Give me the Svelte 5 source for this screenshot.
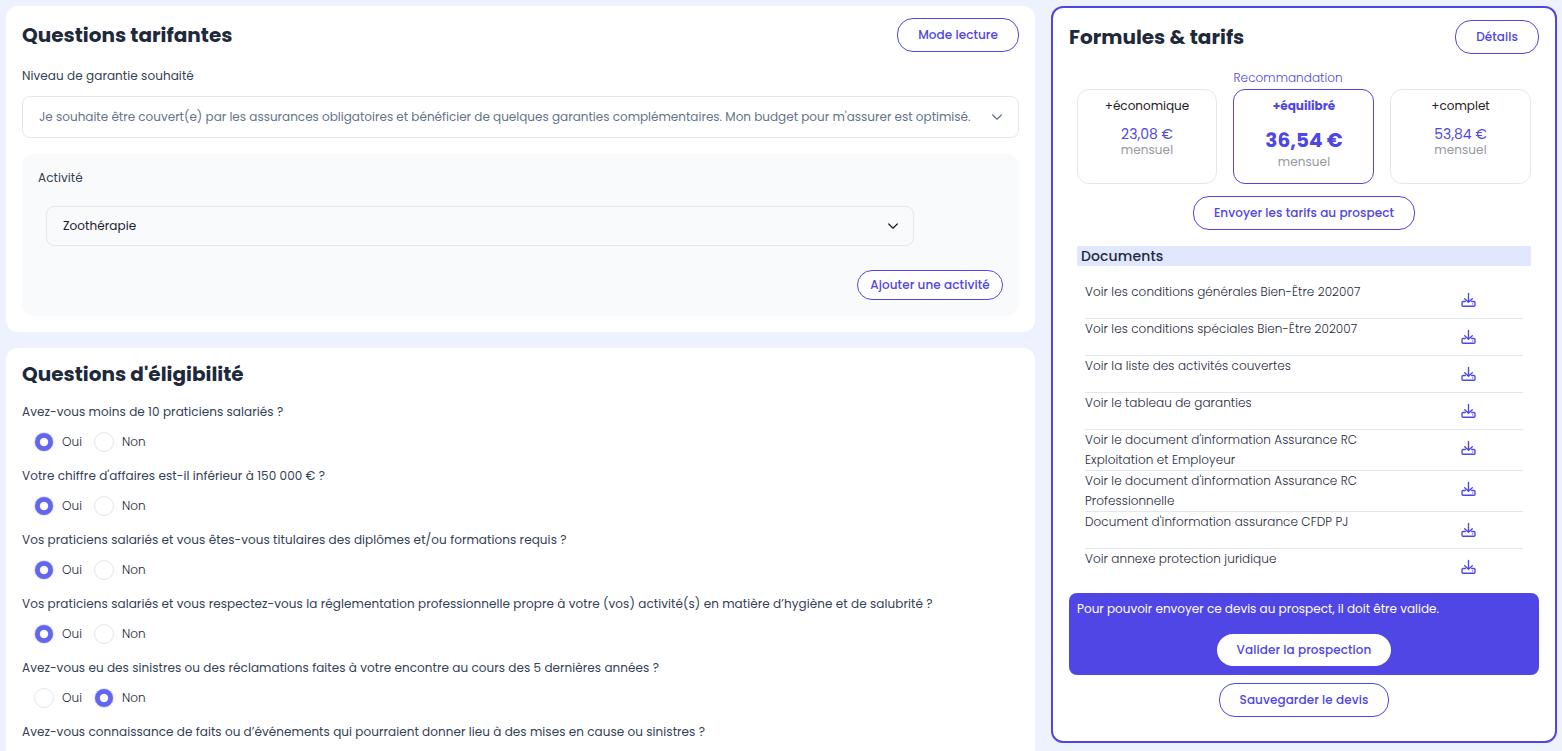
<script>
  const questions = [
    { text: 'Avez-vous moins de 10 praticiens salariés ?', yes: true },
    { text: "Votre chiffre d'affaires est-il inférieur à 150 000 € ?", yes: true },
    { text: 'Vos praticiens salariés et vous êtes-vous titulaires des diplômes et/ou formations requis ?', yes: true },
    { text: 'Vos praticiens salariés et vous respectez-vous la réglementation professionnelle propre à votre (vos) activité(s) en matière d’hygiène et de salubrité ?', yes: true },
    { text: 'Avez-vous eu des sinistres ou des réclamations faites à votre encontre au cours des 5 dernières années ?', yes: false, snug: true },
    { text: 'Avez-vous connaissance de faits ou d’événements qui pourraient donner lieu à des mises en cause ou sinistres ?', snug: true }
  ];
  const plans = [
    { name: '+économique', price: '23,08 €' },
    { name: '+équilibré', price: '36,54 €', best: true },
    { name: '+complet', price: '53,84 €' }
  ];
  const documents = [
    ['Voir les conditions générales Bien-Être 202007'],
    ['Voir les conditions spéciales Bien-Être 202007'],
    ['Voir la liste des activités couvertes'],
    ['Voir le tableau de garanties'],
    ["Voir le document d'information Assurance RC", 'Exploitation et Employeur'],
    ["Voir le document d'information Assurance RC", 'Professionnelle'],
    ["Document d'information assurance CFDP PJ"],
    ['Voir annexe protection juridique']
  ];
</script>

{#snippet chevron()}
  <svg class="chevron" viewBox="0 0 12 12" width="12" height="12"><path d="M1.7 4 6 8.2 10.3 4" /></svg>
{/snippet}

<div class="page">
  <main>
    <section class="card rates">
      <header>
        <h2>Questions tarifantes</h2>
        <button>Mode lecture</button>
      </header>
      <p class="label">Niveau de garantie souhaité</p>
      <div class="select level">
        <span>Je souhaite être couvert(e) par les assurances obligatoires et bénéficier de quelques garanties complémentaires. Mon budget pour m'assurer est optimisé.</span>
        {@render chevron()}
      </div>
      <div class="activity">
        <p class="label">Activité</p>
        <div class="select kind">
          <span>Zoothérapie</span>
          {@render chevron()}
        </div>
        <button class="small">Ajouter une activité</button>
      </div>
    </section>

    <section class="card eligibility">
      <h2>Questions d'éligibilité</h2>
      {#each questions as q}
        <div class="question">
          <p class="label" class:snug={q.snug}>{q.text}</p>
          {#if q.yes !== undefined}
            <div class="choices">
              <span class="radio" class:on={q.yes}></span>
              <span class="answer">Oui</span>
              <span class="radio" class:on={!q.yes}></span>
              <span class="answer">Non</span>
            </div>
          {/if}
        </div>
      {/each}
    </section>
  </main>

  <aside>
    <header>
      <h2>Formules &amp; tarifs</h2>
      <button>Détails</button>
    </header>
    <p class="advice">Recommandation</p>
    <div class="plans">
      {#each plans as p}
        <div class="plan" class:best={p.best}>
          <div class="name">{p.name}</div>
          <div class="price">{p.price}</div>
          <div class="period">mensuel</div>
        </div>
      {/each}
    </div>
    <button class="send">Envoyer les tarifs au prospect</button>
    <h3>Documents</h3>
    <ul>
      {#each documents as lines}
        <li>
          <div class="doc">
            {#each lines as text}
              <div>{text}</div>
            {/each}
          </div>
          <svg class="download" viewBox="0 0 16 16" width="16" height="16">
            <path d="M7.5 1.5V10M3.7 6.7l3.8 3.6 3.8-3.6M4.3 9.5H2.2Q1 9.5 1 10.5v2.7q0 1 1 1h11q1 0 1-1v-2.7q0-1-1.2-1h-2.1" />
            <circle cx="11.7" cy="11.9" r=".6" />
          </svg>
        </li>
      {/each}
    </ul>
    <div class="notice">
      <p>Pour pouvoir envoyer ce devis au prospect, il doit être valide.</p>
      <button class="solid">Valider la prospection</button>
    </div>
    <button class="save">Sauvegarder le devis</button>
  </aside>
</div>

<style>
  :global(body) { margin: 0; background: #eef2ff; overflow: hidden; }
  .page, .page * { box-sizing: border-box; }
  .page {
    display: flex;
    gap: 16px;
    height: 751px;
    padding: 6px 5px 0 6px;
    overflow: hidden;
    background: #eef2ff;
    color: #334155;
    font: 400 12px/20px Poppins, Inter, sans-serif;
  }
  h2, h3, p, ul { margin: 0; padding: 0; }
  span, p, h2, button { white-space: nowrap; }
  main { width: 1029px; flex: none; display: flex; flex-direction: column; gap: 16px; }
  .card { flex: none; background: #fff; border-radius: 12px; padding: 0 16px; }
  .rates { height: 326px; padding-top: 12px; }
  header { display: flex; justify-content: space-between; align-items: center; height: 34px; }
  h2 { font-size: 20px; line-height: 28px; font-weight: 700; color: #1e293b; }
  button {
    display: flex;
    align-items: center;
    justify-content: center;
    height: 34px;
    padding: 0 20px;
    border: 1px solid #4f46e5;
    border-radius: 16px;
    background: #fff;
    color: #4f46e5;
    font: inherit;
    font-weight: 500;
    letter-spacing: .075px;
  }
  .label { height: 20px; font-weight: 400; letter-spacing: .07px; }
  .label.snug { letter-spacing: .055px; }
  .rates > .label { margin-top: 14px; }
  .select {
    display: flex;
    align-items: center;
    justify-content: space-between;
    border: 1px solid #e2e8f0;
    border-radius: 8px;
    padding: 0 15px 0 16px;
  }
  .level { height: 42px; margin-top: 10px; color: #64748b; }
  .chevron { flex: none; fill: none; stroke: currentColor; stroke-width: 1.2; stroke-linecap: round; stroke-linejoin: round; }
  .activity {
    display: flex;
    flex-direction: column;
    height: 162px;
    margin-top: 16px;
    padding: 14px 16px 16px;
    border-radius: 12px;
    background: #f8fafc;
  }
  .kind { width: 868px; height: 40px; margin: 18px 0 24px 8px; padding-right: 14px; color: #1e1b2e; letter-spacing: .07px; }
  .small { align-self: flex-end; width: 146px; height: 30px; padding: 0; letter-spacing: .1px; }
  .eligibility { height: 460px; padding-top: 12px; }
  .question { height: 64px; }
  .eligibility h2 { margin-bottom: 14px; }
  .choices { display: flex; align-items: center; height: 20px; margin-top: 10px; padding-left: 12px; }
  .radio { width: 20px; height: 20px; border: 1px solid #e5e7eb; border-radius: 50%; background: #fff; }
  .radio.on { background: radial-gradient(circle, #fff 3.7px, #6366f1 4.6px); border-color: #dfe0fb; }
  .answer { width: 40px; padding-left: 8px; font-weight: 300; letter-spacing: .05px; color: #1e293b; }

  aside {
    width: 506px;
    height: 737px;
    padding: 12px 16px;
    border: 2px solid #4f46e5;
    border-radius: 12px;
    background: #fff;
  }
  .advice { height: 20px; margin-top: 14px; padding-left: 164.5px; font-weight: 300; letter-spacing: .06px; color: #4f46e5; }
  .plans { display: grid; grid-template-columns: 140px 141px 141px; gap: 16px; padding: 0 8px; margin-top: 1px; }
  .plan { height: 95px; padding-top: 6px; border: 1px solid #e2e8f0; border-radius: 12px; text-align: center; }
  .name { color: #1f2023; }
  .price { margin-top: 9px; font-size: 14px; line-height: 18px; color: #4f46e5; }
  .period { line-height: 14px; font-weight: 400; letter-spacing: .07px; color: #9699a0; }
  .best { border-color: #4f46e5; padding-left: 1px; }
  .best .name { color: #4f46e5; font-weight: 700; }
  .best .price { margin-top: 10px; font-size: 20px; line-height: 28px; font-weight: 700; }
  .best .period { line-height: 16px; }
  .send { margin: 12px auto 16px; }
  h3 { height: 20px; margin: 0 8px 16px; padding-left: 4px; background: #e0e7ff; color: #1e293b; font-size: 14px; line-height: 20px; font-weight: 500; letter-spacing: .12px; }
  ul { margin: 0 16px; list-style: none; }
  li { display: flex; justify-content: space-between; min-height: 37px; padding-right: 46px; border-bottom: 1px solid #e2e8f0; color: #1e293b; font-weight: 300; letter-spacing: .065px; }
  li:last-child { border: 0; }
  .download { flex: none; margin-top: 10px; fill: none; stroke: #4f46e5; stroke-width: 1.35; stroke-linecap: round; stroke-linejoin: round; }
  .download circle { fill: #4f46e5; stroke: none; }
  .notice { height: 82px; margin-top: 7px; padding: 6px 8px; border-radius: 8px; background: #4f46e5; color: #fff; }
  .solid { height: 32px; margin: 15px auto 0; border: 0; }
  .save { margin: 8px auto 0; }
</style>
